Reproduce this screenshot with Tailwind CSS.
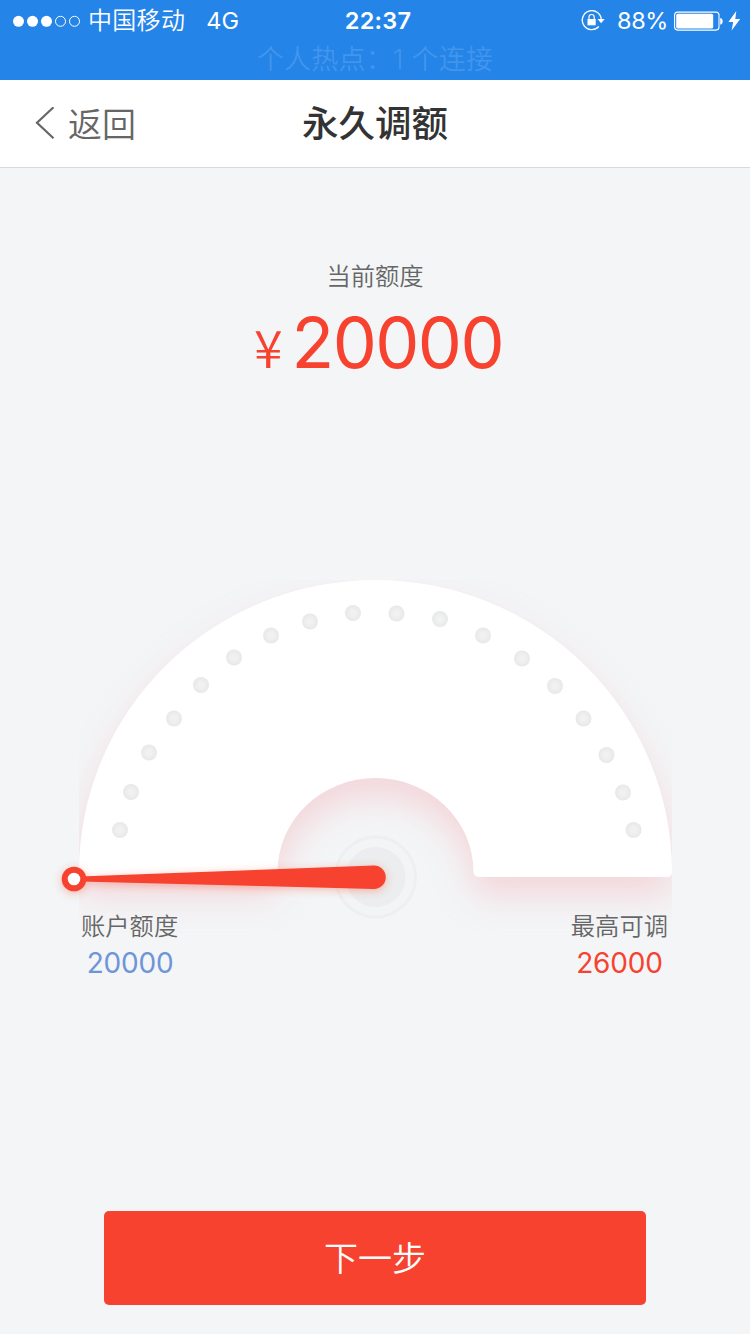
<!DOCTYPE html>
<html lang="zh-CN">

<head>
    <meta charset="UTF-8" />
    <meta name="viewport" content="width=device-width, initial-scale=1.0" />
    <title>永久调额</title>
    <script src="https://cdn.jsdelivr.net/npm/@tailwindcss/browser@4"></script>
</head>

<body class="bg-[#f3f5f7] w-[750px] h-[1334px] overflow-hidden font-['Inter','Noto_Sans_CJK_SC',sans-serif] text-[#666]">
    <!-- Status bar -->
    <div class="h-20 bg-[#2484e8] text-white">
        <div class="h-10 grid grid-cols-3 items-center">
            <div class="flex items-center pl-3 h-10">
                <svg class="w-[70px] h-3 shrink-0" viewBox="0 0 70 12">
                    <g fill="#fff">
                        <circle cx="6.5" cy="6.300" r="5.5" />
                        <circle cx="20.5" cy="6.300" r="5.5" />
                        <circle cx="34.5" cy="6.300" r="5.5" />
                    </g>
                    <g fill="none" stroke="#fff">
                        <circle cx="48.5" cy="6.300" r="5" />
                        <circle cx="62.5" cy="6.300" r="5" />
                    </g>
                </svg>
                <span class="ml-[6px] pt-px text-2xl leading-10 font-[350] tracking-[0.3px] whitespace-nowrap">中国移动</span>
                <span class="ml-[21px] pt-px text-[23.5px] leading-10">4G</span>
            </div>
            <div class="text-center text-[23.5px] leading-10 font-semibold pl-[6px] pt-px tracking-[0.2px]">22:37</div>
            <div class="flex items-center justify-end pr-[9px] h-10">
                <svg class="w-[25px] h-[22px] shrink-0" viewBox="0 0 25 22">
                    <path d="M18.800 16.600A9.500 9.500 0 1 1 21.300 9.500" fill="none" stroke="#fff" stroke-width="1.4" />
                    <path d="M17.500 9h7.200l-3.600 4.200z" fill="#fff" />
                    <rect x="7.500" y="9" width="8.200" height="6.300" fill="#fff" />
                    <path d="M9 9.500V7.100a2.600 2.600 0 0 1 5.200 0V9.500" fill="none" stroke="#fff" stroke-width="1.2" />
                </svg>
                <span class="ml-[12px] pt-px text-[23.5px] leading-10 tracking-[-0.4px]">88%</span>
                <svg class="ml-[6px] w-[50px] h-5 shrink-0" viewBox="0 0 50 20">
                    <rect x=".6" y="1.1" width="44.4" height="18" rx="3" fill="none" stroke="#fff" stroke-width="1.1" />
                    <rect x="2.2" y="2.7" width="37" height="14.8" rx="1.5" fill="#fff" />
                    <path d="M46.2 7c3.400.3 3.400 6.400 0 6.700z" fill="#fff" />
                </svg>
                <svg class="ml-1 w-[13px] h-5 shrink-0" viewBox="0 0 13 20">
                    <path d="M8.300 0L.4 11h4.800L3.600 19.500 12.200 8H7.300z" fill="#fff" />
                </svg>
            </div>
        </div>
        <div class="h-10 leading-10 text-center text-[27px] font-[350] tracking-[0.2px] text-[#4a9aee]/80">个人热点：1 个连接</div>
    </div>

    <!-- Nav bar -->
    <header class="h-[88px] bg-white border-b border-[#d9dadb] grid grid-cols-3 items-center">
        <div class="flex items-center pl-[35px]">
            <svg class="w-5 h-[34px]" viewBox="0 0 20 34">
                <path d="M18.500 .3L2 15.800l16.500 15.500" fill="none" stroke="#666" stroke-width="2.2" />
            </svg>
            <span class="ml-[13px] pt-px text-[34px] leading-[87px] font-[350]">返回</span>
        </div>
        <h1 class="text-center text-[36.5px] leading-[87px] pt-px font-medium text-[#333]">永久调额</h1>
    </header>

    <main>
        <div class="pt-[88px] text-center">
            <p class="text-[24.3px] leading-10 font-[350]">当前额度</p>
            <p class="mt-[7px] h-20 flex justify-center items-baseline text-[#f6422e] leading-[80px] pl-[7px]">
                <span class="text-[52px] leading-[80px] font-['Noto_Sans_CJK_SC'] font-[350]">¥</span>
                <span class="ml-[9px] text-[70px] tracking-[-1.6px]">20000</span>
            </p>
        </div>

        <!-- Gauge -->
        <svg class="block mt-[177px] w-[750px] h-[347px] overflow-visible" viewBox="0 560 750 347">
            <defs>
                <filter id="glow" x="-20%" y="-20%" width="140%" height="150%">
                    <feGaussianBlur stdDeviation="17" />
                </filter>
                <filter id="needle" x="-10%" y="-100%" width="120%" height="300%">
                    <feDropShadow dx="0" dy="2" stdDeviation="4" flood-color="#f6422e" flood-opacity=".35" />
                </filter>
                <clipPath id="box">
                    <rect x="79" y="580" width="593" height="360" />
                </clipPath>
                <radialGradient id="dot">
                    <stop offset=".3" stop-color="#f0f1f1" />
                    <stop offset="1" stop-color="#e8e8e9" />
                </radialGradient>
                <path id="arc" d="M79 872A296.500 292 0 0 1 672 872Q672 877 667 877H479Q474 877 473.500 872A98 94 0 0 0 277.500 872Q277 877 272 877H84Q79 877 79 872Z" />
            </defs>
            <g clip-path="url(#box)">
                <use href="#arc" y="18" fill="#f4b8bd" opacity=".5" filter="url(#glow)" />
            </g>
            <circle cx="375.500" cy="877" r="40" fill="#f1f3f4" fill-opacity=".6" stroke="#edeff0" stroke-width="3" />
            <circle cx="375.500" cy="877" r="30" fill="#ebedee" />
            <use href="#arc" fill="#fff" />
            <g id="dots" fill="url(#dot)"></g>
            <g filter="url(#needle)">
                <path d="M80 876.500L374 865.500A11.700 11.700 0 0 1 374 889L80 881.500Z" fill="#f6422e" />
                <circle cx="74" cy="879" r="9.300" fill="#fff" stroke="#f6422e" stroke-width="6" />
            </g>
        </svg>

        <div class="relative flex justify-between pl-[81px] pr-[82px] text-center">
            <div>
                <p class="text-[24.3px] leading-[38px] font-[350]">账户额度</p>
                <p class="text-[28px] leading-9 pl-px tracking-[-0.2px] text-[#6f94d8]">20000</p>
            </div>
            <div>
                <p class="text-[24.3px] leading-[38px] font-[350]">最高可调</p>
                <p class="text-[28px] leading-9 tracking-[-0.2px] text-[#f6422e]">26000</p>
            </div>
        </div>

        <button class="block mx-auto mt-[230px] w-[542px] h-[94px] rounded-[5px] bg-[#f6422e] text-white text-[34px] font-[350]">下一步</button>
    </main>

    <script>
        const dots = [
            [120, 830], [131, 792], [149, 752.5], [174, 718.5], [201, 685], [234, 657.5],
            [271, 635.5], [310, 621.5], [353, 613], [396.5, 613.5], [440, 619], [483, 635.5],
            [522, 658.5], [555, 686], [583.5, 718.5], [606.5, 755], [623, 792.5], [633.5, 830]
        ];

        document.getElementById("dots").innerHTML = dots
            .map(([x, y]) => `<circle cx="${x}" cy="${y}" r="8" />`)
            .join("");
    </script>
</body>

</html>
